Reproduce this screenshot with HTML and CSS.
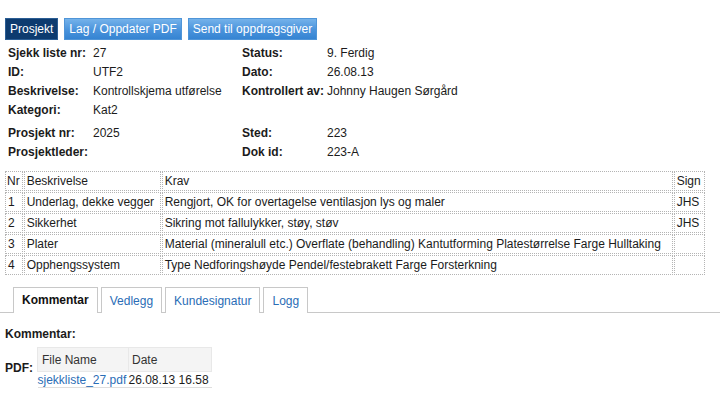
FILE: index.html
```html
<!DOCTYPE html>
<html lang="no">
<head>
<meta charset="utf-8">
<title>Sjekkliste</title>
<link rel="stylesheet" href="styles.css">
</head>
<body>
<div class="toolbar">
  <button class="btn btn-active">Prosjekt</button>
  <button class="btn">Lag / Oppdater PDF</button>
  <button class="btn">Send til oppdragsgiver</button>
</div>

<div class="info">
  <div class="lbl">Sjekk liste nr:</div><div class="val">27</div>
  <div class="lbl">Status:</div><div class="val">9. Ferdig</div>
  <div class="lbl">ID:</div><div class="val">UTF2</div>
  <div class="lbl">Dato:</div><div class="val">26.08.13</div>
  <div class="lbl">Beskrivelse:</div><div class="val">Kontrollskjema utførelse</div>
  <div class="lbl">Kontrollert av:</div><div class="val">Johnny Haugen Sørgård</div>
  <div class="lbl">Kategori:</div><div class="val">Kat2</div>
  <div class="lbl"></div><div class="val"></div>
</div>
<div class="info info-second">
  <div class="lbl">Prosjekt nr:</div><div class="val">2025</div>
  <div class="lbl">Sted:</div><div class="val">223</div>
  <div class="lbl">Prosjektleder:</div><div class="val"></div>
  <div class="lbl">Dok id:</div><div class="val">223-A</div>
</div>

<table class="items">
  <thead>
    <tr><th class="c-nr">Nr</th><th class="c-desc">Beskrivelse</th><th class="c-krav">Krav</th><th class="c-sign">Sign</th></tr>
  </thead>
  <tbody>
    <tr><td>1</td><td>Underlag, dekke vegger</td><td>Rengjort, OK for overtagelse ventilasjon lys og maler</td><td>JHS</td></tr>
    <tr><td>2</td><td>Sikkerhet</td><td>Sikring mot fallulykker, støy, støv</td><td>JHS</td></tr>
    <tr><td>3</td><td>Plater</td><td>Material (mineralull etc.) Overflate (behandling) Kantutforming Platestørrelse Farge Hulltaking</td><td></td></tr>
    <tr><td>4</td><td>Opphengssystem</td><td>Type Nedforingshøyde Pendel/festebrakett Farge Forsterkning</td><td></td></tr>
  </tbody>
</table>

<div class="tabs">
  <a class="tab tab-active">Kommentar</a>
  <a class="tab">Vedlegg</a>
  <a class="tab">Kundesignatur</a>
  <a class="tab">Logg</a>
</div>

<div class="panel">
  <div class="section-title">Kommentar:</div>
  <div class="pdf-row">
    <div class="pdf-label">PDF:</div>
    <table class="files">
      <thead><tr><th class="f-name">File Name</th><th class="f-date">Date</th></tr></thead>
      <tbody><tr><td><a class="file-link">sjekkliste_27.pdf</a></td><td>26.08.13 16.58</td></tr></tbody>
    </table>
  </div>
</div>
</body>
</html>
```

FILE: styles.css
```css
* { box-sizing: border-box; }

body {
  margin: 0;
  font-family: "Liberation Sans", Arial, sans-serif;
  font-size: 12px;
  color: #1b1b1b;
  background: #fff;
}

.toolbar {
  display: flex;
  gap: 6px;
  padding: 18px 0 0 5px;
}

.btn {
  height: 22px;
  padding: 0 4px;
  font-family: "Liberation Sans", Arial, sans-serif;
  font-size: 12px;
  color: #fff;
  border: 1px solid #4f95d8;
  background: linear-gradient(#74b2ea, #4a93dc 55%, #3584d2);
  cursor: pointer;
}

.btn-active {
  background: #0d3b6f;
  border-color: #2a5d94;
}

.info {
  display: grid;
  grid-template-columns: 85px 149px 85px auto;
  grid-auto-rows: 19px;
  align-items: center;
  padding-left: 8px;
  margin-top: 3px;
  line-height: 14px;
}

.info-second { margin-top: 4px; }

.lbl { font-weight: bold; }

.items {
  margin: 9px 0 0 4px;
  border-collapse: separate;
  border-spacing: 1px;
  table-layout: fixed;
}

.items th, .items td {
  border: 1px dotted #b4b4b4;
  padding: 2px 2px;
  height: 20px;
  line-height: 14px;
  font-weight: normal;
  text-align: left;
  white-space: nowrap;
  overflow: hidden;
}

.items .c-nr { width: 16px; padding-left: 1px; }
.items .c-desc { width: 137px; }
.items .c-krav { width: 511px; }
.items .c-sign { width: 31px; }

.tabs {
  display: flex;
  gap: 3px;
  margin-top: 11px;
  padding-left: 13px;
  border-bottom: 1px solid #c8c8c8;
  height: 26px;
}

.tab {
  display: flex;
  align-items: center;
  height: 26px;
  padding: 0 8px;
  border: 1px solid #c8c8c8;
  border-bottom: none;
  color: #2a6db6;
  background: #fff;
}

.tab-active {
  color: #111;
  font-weight: bold;
  height: 26px;
  margin-bottom: -1px;
  padding-bottom: 1px;
}

.panel { padding-left: 5px; }

.section-title {
  font-weight: bold;
  margin-top: 14px;
  line-height: 14px;
}

.pdf-row {
  display: flex;
  align-items: center;
  margin-top: 6px;
}

.pdf-label {
  font-weight: bold;
  width: 32px;
}

.files {
  border-collapse: collapse;
}

.files th {
  background: #f4f4f4;
  border: 1px solid #e8e8e8;
  font-weight: normal;
  text-align: left;
  height: 24px;
  padding: 0 4px;
  color: #333;
}

.files .f-name { width: 91px; }
.files .f-date { width: 83px; padding-left: 3px; }

.files td {
  padding: 0;
  height: 16px;
  line-height: 14px;
  border-bottom: 1px solid #dedede;
}

.file-link { color: #2a6db6; }
```
